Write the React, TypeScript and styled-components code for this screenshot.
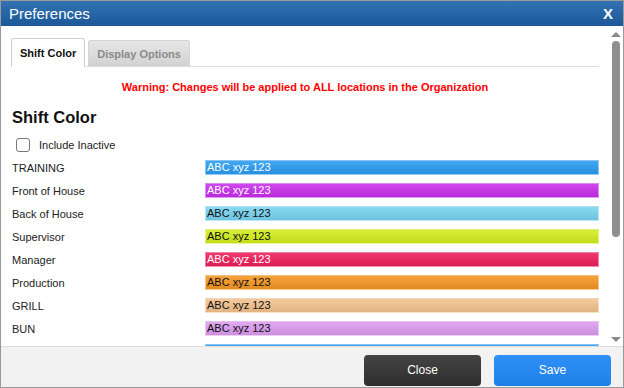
import React from 'react';
import styled, {createGlobalStyle} from 'styled-components';

const Global = createGlobalStyle`
  html, body { margin: 0; padding: 0; background: #fff; }
  body { font-family: "Liberation Sans", Arial, sans-serif; }
`

const Window = styled.div`
  width: 624px;
  height: 388px;
  box-sizing: border-box;
  border: 1px solid #9a9a9a;
  display: flex;
  flex-direction: column;
  overflow: hidden;
`

const TitleBar = styled.div`
  height: 25px;
  flex: none;
  display: flex;
  align-items: center;
  justify-content: space-between;
  padding: 0 10px 0 8px;
  background: linear-gradient(#3272b3, #1c5898);
  color: #fff;
  font-size: 15px;
`

const CloseX = styled.span`
  font-weight: bold;
  font-size: 15px;
`

const Body = styled.div`
  flex: 1;
  display: flex;
  min-height: 0;
`

const Content = styled.div`
  flex: 1;
  overflow: hidden;
  padding: 12px 9px 0 10px;
`

const TabStrip = styled.div`
  display: flex;
  align-items: flex-end;
  gap: 3px;
  border-bottom: 1px solid #dcdcdc;
  height: 28px;
`

const Tab = styled.div<{active?: boolean}>`
  height: ${p => (p.active ? 29 : 26)}px;
  box-sizing: border-box;
  padding: 0 8px;
  display: flex;
  align-items: center;
  font-size: 11px;
  font-weight: bold;
  border-radius: 3px 3px 0 0;
  margin-bottom: ${p => (p.active ? -1 : 0)}px;
  color: ${p => (p.active ? '#111' : '#8a8a8a')};
  background: ${p => (p.active ? '#fff' : 'linear-gradient(#e6e6e6, #d2d2d2)')};
  border: 1px solid ${p => (p.active ? '#cfcfcf' : '#d4d4d4')};
  border-bottom: ${p => (p.active ? '1px solid #fff' : 'none')};
`

const Warning = styled.div`
  text-align: center;
  color: #f00;
  font-weight: bold;
  font-size: 11px;
  margin-top: 14px;
`

const Heading = styled.h2`
  font-size: 16.5px;
  font-weight: bold;
  margin: 15px 0 0 1px;
  color: #111;
`

const CheckRow = styled.label`
  display: flex;
  align-items: center;
  gap: 9px;
  margin: 11px 0 0 5px;
  font-size: 11px;
  color: #222;
`

const CheckBox = styled.span`
  width: 12px;
  height: 12px;
  border: 1.5px solid #777;
  border-radius: 3px;
`

const List = styled.div`
  margin-top: 4px;
`

const Row = styled.div`
  display: grid;
  grid-template-columns: 194px 1fr;
  align-items: center;
  height: 23px;
`

const Label = styled.span`
  font-size: 11px;
  color: #222;
  padding-left: 1px;
`

const Bar = styled.div<{bg: string; dark?: boolean}>`
  height: 15px;
  box-sizing: border-box;
  border: 1px solid rgba(255, 255, 255, 0.45);
  background: linear-gradient(rgba(255,255,255,0.12), rgba(0,0,0,0.08)), ${p => p.bg};
  color: ${p => (p.dark ? '#111' : '#fff')};
  font-size: 11px;
  line-height: 13px;
  padding-left: 1px;
`

const Scrollbar = styled.div`
  width: 15px;
  flex: none;
  display: flex;
  flex-direction: column;
  align-items: center;
  padding: 6px 0 4px;
  box-sizing: border-box;
`

const Arrow = styled.div<{down?: boolean}>`
  width: 0;
  height: 0;
  border-left: 5px solid transparent;
  border-right: 5px solid transparent;
  ${p => (p.down ? 'border-top: 5px solid #8a8a8a;' : 'border-bottom: 5px solid #8a8a8a;')}
`

const Track = styled.div`
  flex: 1;
  width: 100%;
  display: flex;
  justify-content: center;
  padding-top: 4px;
`

const Thumb = styled.div`
  width: 8px;
  height: 196px;
  border-radius: 4px;
  background: #8f8f8f;
`

const Footer = styled.div`
  height: 40px;
  flex: none;
  background: #f2f2f2;
  border-top: 1px solid #dedede;
  display: flex;
  justify-content: flex-end;
  align-items: center;
  gap: 13px;
  padding-right: 12px;
`

const Button = styled.button<{primary?: boolean}>`
  width: 117px;
  height: 31px;
  border-radius: 4px;
  border: none;
  color: #fff;
  font-family: "Liberation Sans", Arial, sans-serif;
  font-size: 12px;
  background: ${p => (p.primary ? 'linear-gradient(#2e90f6, #1f7fe8)' : 'linear-gradient(#444, #2e2e2e)')};
  margin-top: 6px;
`

const shifts = [
  {name: 'TRAINING', bg: '#2a9cf2'},
  {name: 'Front of House', bg: '#c92ded'},
  {name: 'Back of House', bg: '#78d4f0', dark: true},
  {name: 'Supervisor', bg: '#d2ee1c', dark: true},
  {name: 'Manager', bg: '#ee1e5a'},
  {name: 'Production', bg: '#f59622', dark: true},
  {name: 'GRILL', bg: '#f4c28e', dark: true},
  {name: 'BUN', bg: '#dd9cf0', dark: true},
  {name: 'FRIES', bg: '#2a9cf2'},
];

const App: React.FC = () => {
  return (
    <>
      <Global />
      <Window>
        <TitleBar>
          <span>Preferences</span>
          <CloseX>X</CloseX>
        </TitleBar>
        <Body>
          <Content>
            <TabStrip>
              <Tab active>Shift Color</Tab>
              <Tab>Display Options</Tab>
            </TabStrip>
            <Warning>Warning: Changes will be applied to ALL locations in the Organization</Warning>
            <Heading>Shift Color</Heading>
            <CheckRow>
              <CheckBox />
              Include Inactive
            </CheckRow>
            <List>
              {shifts.map(s => (
                <Row key={s.name}>
                  <Label>{s.name}</Label>
                  <Bar bg={s.bg} dark={s.dark}>ABC xyz 123</Bar>
                </Row>
              ))}
            </List>
          </Content>
          <Scrollbar>
            <Arrow />
            <Track>
              <Thumb />
            </Track>
            <Arrow down />
          </Scrollbar>
        </Body>
        <Footer>
          <Button>Close</Button>
          <Button primary>Save</Button>
        </Footer>
      </Window>
    </>
  );
};

export default App;
